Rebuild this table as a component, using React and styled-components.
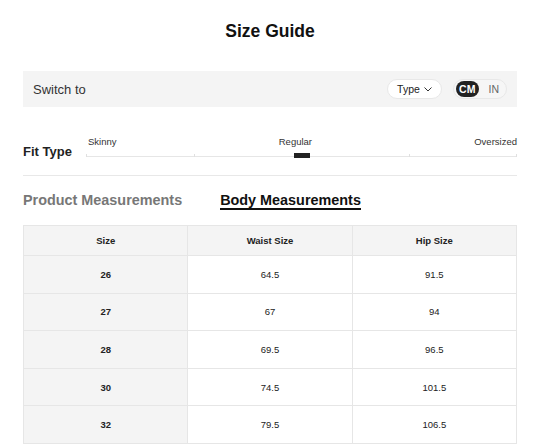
import React, { useState } from "react";
import styled, { createGlobalStyle } from "styled-components";

const GlobalStyle = createGlobalStyle`
  body {
    margin: 0;
    background: #fff;
    font-family: "Liberation Sans", Arial, sans-serif;
    color: #222;
  }
`;

const Page = styled.div`
  width: 494px;
  padding-left: 23px;
`;

const Title = styled.h1`
  margin: 0;
  padding-top: 21px;
  font-size: 17.5px;
  line-height: 20px;
  font-weight: 700;
  text-align: center;
  color: #111;
`;

const SwitchBar = styled.div`
  margin-top: 30px;
  height: 36px;
  padding: 0 10px;
  background: #f4f4f4;
  display: flex;
  align-items: center;
  justify-content: space-between;
`;

const SwitchLabel = styled.span`
  font-size: 13px;
  color: #333;
`;

const Controls = styled.div`
  display: flex;
  align-items: center;
  gap: 11px;
`;

const TypePill = styled.button`
  width: 55px;
  height: 20px;
  border: 1px solid #e8e8e8;
  border-radius: 10px;
  background: #fff;
  display: flex;
  align-items: center;
  justify-content: center;
  gap: 4px;
  padding: 0;
  font-family: inherit;
  font-size: 10.5px;
  color: #222;
`;

const UnitToggle = styled.div`
  width: 54px;
  height: 20px;
  box-sizing: border-box;
  border: 1px solid #e8e8e8;
  border-radius: 10px;
  background: #f6f6f6;
  display: flex;
  align-items: center;
  padding: 0 1px;
`;

const UnitOption = styled.span`
  width: 23px;
  height: 16px;
  border-radius: 8px;
  display: flex;
  align-items: center;
  justify-content: center;
  font-size: 10.5px;
  font-weight: ${(p) => (p.$active ? 700 : 400)};
  background: ${(p) => (p.$active ? "#222" : "transparent")};
  color: ${(p) => (p.$active ? "#fff" : "#666")};
  margin-left: ${(p) => (p.$active ? "1px" : "4px")};
`;

const FitRow = styled.div`
  margin-top: 28px;
  height: 28px;
  display: flex;
`;

const FitLabel = styled.div`
  width: 63px;
  align-self: flex-end;
  margin-bottom: 3px;
  font-size: 13px;
  line-height: 16px;
  font-weight: 700;
  color: #222;
`;

const Slider = styled.div`
  flex: 1;
  display: flex;
  flex-direction: column;
`;

const SliderLabels = styled.div`
  height: 14px;
  display: flex;
  justify-content: space-between;
  font-size: 9.5px;
  line-height: 14px;
  color: #333;
  padding-left: 2px;
`;

const Track = styled.div`
  position: relative;
  height: 14px;
  &::before {
    content: "";
    position: absolute;
    left: 0;
    right: 0;
    top: 7px;
    height: 1px;
    background: #e6e6e6;
  }
`;

const Tick = styled.span`
  position: absolute;
  top: 5px;
  width: 1px;
  height: 3px;
  background: #e0e0e0;
`;

const Thumb = styled.span`
  position: absolute;
  top: 4px;
  width: 16px;
  height: 5px;
  margin-left: -8px;
  background: #222;
`;

const Divider = styled.div`
  margin-top: 12px;
  height: 1px;
  background: #e8e8e8;
`;

const Tabs = styled.div`
  margin-top: 16px;
  display: flex;
  gap: 38px;
`;

const Tab = styled.button`
  padding: 0;
  border: none;
  background: none;
  font-family: inherit;
  font-size: 14.4px;
  line-height: 16px;
  font-weight: 700;
  color: ${(p) => (p.$active ? "#111" : "#777")};
  border-bottom: 2px solid ${(p) => (p.$active ? "#111" : "transparent")};
`;

const Table = styled.table`
  margin-top: 15px;
  width: 100%;
  border-collapse: collapse;
  table-layout: fixed;
  font-size: 9.5px;
`;

const HeadCell = styled.th`
  height: 29px;
  padding: 0;
  border: 1px solid #e6e6e6;
  background: #f4f4f4;
  font-weight: 700;
  color: #222;
`;

const Cell = styled.td`
  height: 36.6px;
  padding: 0;
  border: 1px solid #e6e6e6;
  text-align: center;
  background: ${(p) => (p.$first ? "#f4f4f4" : "#fff")};
  font-weight: ${(p) => (p.$first ? 700 : 400)};
  color: #222;
`;

const rows = [
  ["26", "64.5", "91.5"],
  ["27", "67", "94"],
  ["28", "69.5", "96.5"],
  ["30", "74.5", "101.5"],
  ["32", "79.5", "106.5"],
];

const Chevron = () => (
  <svg width="8" height="5" viewBox="0 0 8 5" fill="none">
    <path d="M0.5 0.5L4 4L7.5 0.5" stroke="#333" strokeWidth="1" />
  </svg>
);

const App = () => {
  const [tab, setTab] = useState("body");
  const [unit, setUnit] = useState("cm");

  return (
    <Page>
      <GlobalStyle />
      <Title>Size Guide</Title>

      <SwitchBar>
        <SwitchLabel>Switch to</SwitchLabel>
        <Controls>
          <TypePill>
            Type <Chevron />
          </TypePill>
          <UnitToggle>
            <UnitOption $active={unit === "cm"} onClick={() => setUnit("cm")}>
              CM
            </UnitOption>
            <UnitOption $active={unit === "in"} onClick={() => setUnit("in")}>
              IN
            </UnitOption>
          </UnitToggle>
        </Controls>
      </SwitchBar>

      <FitRow>
        <FitLabel>Fit Type</FitLabel>
        <Slider>
          <SliderLabels>
            <span>Skinny</span>
            <span>Regular</span>
            <span>Oversized</span>
          </SliderLabels>
          <Track>
            {[0, 25, 75, 100].map((p) => (
              <Tick key={p} style={{ left: `calc(${p}% - ${p === 100 ? 1 : 0}px)` }} />
            ))}
            <Thumb style={{ left: "50%" }} />
          </Track>
        </Slider>
      </FitRow>

      <Divider />

      <Tabs>
        <Tab $active={tab === "product"} onClick={() => setTab("product")}>
          Product Measurements
        </Tab>
        <Tab $active={tab === "body"} onClick={() => setTab("body")}>
          Body Measurements
        </Tab>
      </Tabs>

      <Table>
        <thead>
          <tr>
            <HeadCell>Size</HeadCell>
            <HeadCell>Waist Size</HeadCell>
            <HeadCell>Hip Size</HeadCell>
          </tr>
        </thead>
        <tbody>
          {rows.map((r) => (
            <tr key={r[0]}>
              {r.map((v, i) => (
                <Cell key={i} $first={i === 0}>
                  {v}
                </Cell>
              ))}
            </tr>
          ))}
        </tbody>
      </Table>
    </Page>
  );
};

export default App;
